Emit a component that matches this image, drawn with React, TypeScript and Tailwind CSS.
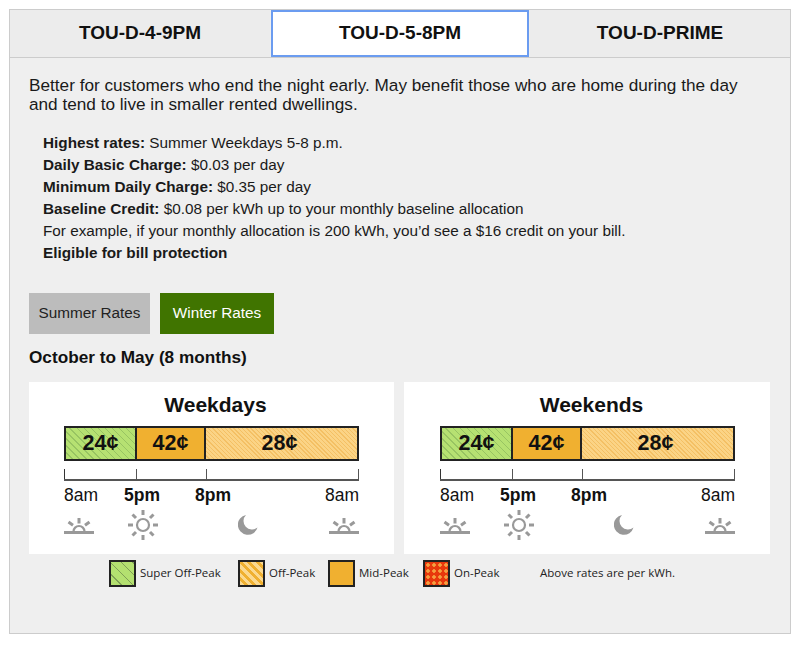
const hatchGreen =
  "bg-[repeating-linear-gradient(45deg,#b6e172,#b6e172_4px,#98c462_4px,#98c462_5px)]";
const hatchOrange =
  "bg-[repeating-linear-gradient(45deg,#fbd486,#fbd486_2px,#f4c064_2px,#f4c064_3px)]";

function SunriseIcon() {
  return (
    <svg width="30" height="18" viewBox="0 0 30 18" fill="none" stroke="#999" strokeWidth="2.2">
      <path d="M0 15.5h30" strokeWidth="3" />
      <path d="M9.5 14.5a5.5 5.5 0 0 1 11 0" />
      <path d="M15 1v5.5M4.5 5l4.5 3.2M25.5 5L21 8.2" strokeWidth="3" />
    </svg>
  );
}

function SunIcon() {
  return (
    <svg width="30" height="30" viewBox="0 0 30 30" fill="none" stroke="#999" strokeWidth="3">
      <circle cx="15" cy="15" r="6" strokeWidth="2.2" />
      <path d="M15 0v5M15 25v5M0 15h5M25 15h5M4.5 4.5l3.5 3.5M22 22l3.5 3.5M4.5 25.5l3.5-3.5M22 8l3.5-3.5" />
    </svg>
  );
}

function MoonIcon() {
  return (
    <svg width="20" height="20" viewBox="0 0 20 20" fill="#999">
      <path d="M8 0a8.5 8.5 0 0 0 11.5 12.5A10 10 0 1 1 8 0z" />
    </svg>
  );
}

function RateChart({ title, className }: { title: string; className: string }) {
  return (
    <div className={`h-[172px] bg-white pt-[10px] ${className}`}>
      <h3 className="pl-[8px] text-center text-[21px] leading-[26px] font-bold text-[#111]">{title}</h3>
      {/* rate bar */}
      <div className="mt-[8px] flex h-[35px] border-2 border-[#222] text-[21.5px] font-bold text-[#111]">
        <div className={`w-[71px] ${hatchGreen} flex items-center justify-center border-r-2 border-[#222]`}>24¢</div>
        <div className="flex w-[69px] items-center justify-center border-r-2 border-[#222] bg-[#f0b030]">42¢</div>
        <div className={`${hatchOrange} flex flex-1 items-center justify-center pr-[4px]`}>28¢</div>
      </div>
      {/* time scale */}
      <div className="mt-[8px] flex h-[12px] border-b-2 border-[#555]">
        <div className="w-[72px] border-l border-[#333]" />
        <div className="w-[70px] border-l border-[#555]" />
        <div className="flex-1 border-x border-[#555]" />
      </div>
      <div className="mt-[4px] flex text-[17.5px] leading-[20px] text-[#111]">
        <span className="w-[60px]">8am</span>
        <span className="w-[71px] font-bold">5pm</span>
        <span className="flex-1 font-bold">8pm</span>
        <span>8am</span>
      </div>
      <div className="mt-[5px] flex h-[30px] items-center">
        <div className="mt-[2px] w-[64px]"><SunriseIcon /></div>
        <div className="w-[111px]"><SunIcon /></div>
        <div className="w-[91px]"><MoonIcon /></div>
        <div className="mt-[2px]"><SunriseIcon /></div>
      </div>
    </div>
  );
}

function LegendItem({ swatch, label, className }: { swatch: string; label: string; className: string }) {
  return (
    <div className={`flex items-center gap-[4px] ${className}`}>
      <div className={`size-[27px] border-2 border-[#222] ${swatch}`} />
      <span>{label}</span>
    </div>
  );
}

export default function App() {
  return (
    <div className="h-[647px] w-[800px] bg-white pt-[9px] pl-[9px] font-['Liberation_Sans',Arial,sans-serif] text-[#111]">
      <div className="h-[625px] w-[782px] border border-[#ccc] bg-[#efefef]">
        {/* tabs */}
        <div className="flex h-[48px] border-b border-[#ccc] text-center text-[19px] font-bold">
          <button className="w-[260px] bg-[#ececec]">TOU-D-4-9PM</button>
          <button className="ml-px w-[258px] border-2 border-[#6b9cf0] bg-white">TOU-D-5-8PM</button>
          <button className="ml-px flex-1 bg-[#ececec]">TOU-D-PRIME</button>
        </div>

        <div className="px-[19px] pt-[18px]">
          <p className="text-[17.2px] leading-[19px] text-[#1a1a1a]">
            Better for customers who end the night early. May benefit those who are home during the day
            <br />
            and tend to live in smaller rented dwellings.
          </p>

          <ul className="mt-[18px] ml-[14px] text-[15.3px] leading-[22px] text-[#1a1a1a]">
            <li><b>Highest rates:</b> Summer Weekdays 5-8 p.m.</li>
            <li><b>Daily Basic Charge:</b> $0.03 per day</li>
            <li><b>Minimum Daily Charge:</b> $0.35 per day</li>
            <li><b>Baseline Credit:</b> $0.08 per kWh up to your monthly baseline allocation</li>
            <li>For example, if your monthly allocation is 200 kWh, you’d see a $16 credit on your bill.</li>
            <li><b>Eligible for bill protection</b></li>
          </ul>

          {/* season toggle */}
          <div className="mt-[29px] flex gap-[10px] text-[15.3px]">
            <button className="h-[41px] w-[121px] bg-[#bcbcbc] text-[#222]">Summer Rates</button>
            <button className="h-[41px] w-[114px] bg-[#407400] text-white">Winter Rates</button>
          </div>

          <h2 className="mt-[13px] text-[17.2px] leading-[20px] font-bold">October to May (8 months)</h2>

          <div className="mt-[15px] flex w-[741px] gap-[10px]">
            <RateChart title="Weekdays" className="w-[365px] px-[35px]" />
            <RateChart title="Weekends" className="w-[366px] pr-[35px] pl-[36px]" />
          </div>

          {/* legend */}
          <div className="mt-[5px] flex h-[28px] items-center font-['Open_Sans',sans-serif] text-[11.5px] text-[#222]">
            <LegendItem
              className="ml-[80px] w-[129px]"
              label="Super Off-Peak"
              swatch="bg-[repeating-linear-gradient(45deg,#b4e070,#b4e070_7px,#7fa055_7px,#7fa055_8px)]"
            />
            <LegendItem
              className="w-[90px]"
              label="Off-Peak"
              swatch="bg-[repeating-linear-gradient(45deg,#fbd98f,#fbd98f_3px,#f0b030_3px,#f0b030_6px)]"
            />
            <LegendItem className="w-[95px]" label="Mid-Peak" swatch="bg-[#f0b030]" />
            <LegendItem
              className="w-[117px]"
              label="On-Peak"
              swatch="bg-[#e8380c] bg-[radial-gradient(#f5a040_1.5px,transparent_2px)] bg-[size:6px_6px]"
            />
            <span>Above rates are per kWh.</span>
          </div>
        </div>
      </div>
    </div>
  );
}
